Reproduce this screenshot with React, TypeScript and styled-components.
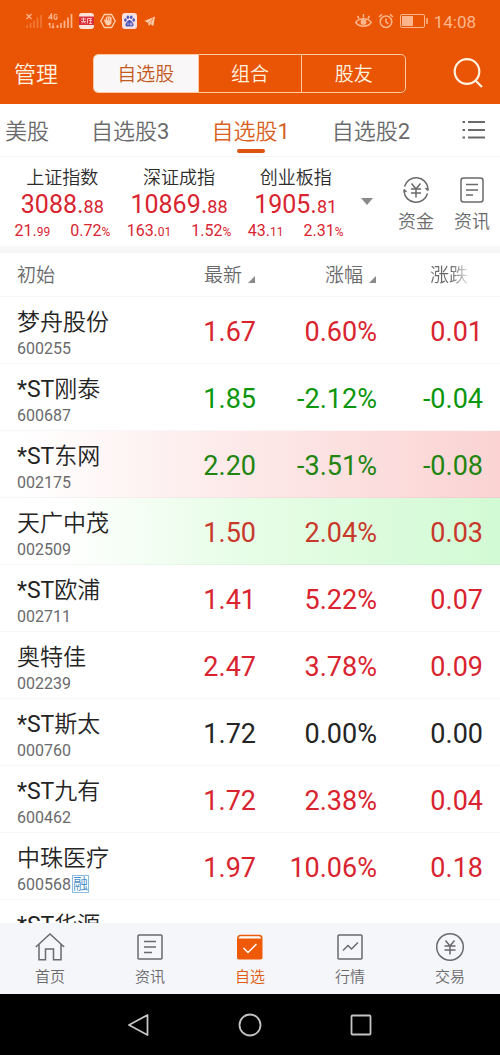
import React from "react";
import styled, { createGlobalStyle, css } from "styled-components";

const orange = "#e95504";
const red = "#d9242f";
const green = "#0c960c";
const ink = "#242424";
const grey = "#6a6a6c";

const GlobalStyle = createGlobalStyle`
  *, *::before, *::after { box-sizing: border-box; }
  body {
    margin: 0;
    background: #fff;
    color: ${ink};
    font-family: Roboto, "Noto Sans CJK SC DemiLight", "Noto Sans CJK SC", sans-serif;
  }
  button {
    margin: 0;
    padding: 0;
    border: 0;
    background: none;
    color: inherit;
    font: inherit;
    cursor: pointer;
  }
`;

const Screen = styled.div`
  display: flex;
  flex-direction: column;
  height: 100vh;
  overflow: hidden;
`;

const Top = styled.header`
  flex: none;
  background: ${orange};
  color: #fff3e2;
`;

const StatusBar = styled.div`
  display: flex;
  justify-content: space-between;
  align-items: center;
  height: 42px;
  padding: 0 24px 0 25px;
  color: #fbb58d;
`;

const StatusGroup = styled.div<{ $gap: number }>`
  display: flex;
  align-items: center;
  gap: ${(p) => p.$gap}px;
`;

const Clock = styled.time`
  padding-top: 2px;
  font-size: 17px;
  line-height: 20px;
`;

const HeaderBar = styled.div`
  display: grid;
  grid-template-columns: 79px 1fr 78px;
  align-items: center;
  height: 62px;
  padding: 0 16px 0 14px;
`;

const Manage = styled.button`
  justify-self: start;
  padding-top: 3px;
  font-size: 22px;
  line-height: 32px;
`;

const Segments = styled.div`
  display: grid;
  grid-template-columns: repeat(3, 1fr);
  height: 39px;
  border: 1px solid #ffc9a3;
  border-radius: 5px;
  overflow: hidden;
`;

const Segment = styled.button<{ $active?: boolean }>`
  padding-top: 3px;
  font-size: 19px;
  line-height: 28px;
  & + & { border-left: 1px solid #ffc9a3; }
  ${(p) => p.$active && css`
    background: #f9f7f7;
    color: #c4591f;
  `}
`;

const SearchButton = styled.button`
  justify-self: end;
  display: flex;
`;

const TabBar = styled.nav`
  flex: none;
  display: flex;
  align-items: center;
  justify-content: space-between;
  height: 53px;
  padding: 0 13px 0 5px;
  border-bottom: 1px solid #f4f4f4;
`;

const TabList = styled.div`
  display: flex;
  gap: 42px;
  height: 100%;
`;

const Tab = styled.button<{ $active?: boolean }>`
  position: relative;
  padding-top: 4px;
  font-size: 22px;
  line-height: 32px;
  white-space: nowrap;
  color: ${(p) => (p.$active ? "#d9601e" : grey)};
  ${(p) => p.$active && css`
    &::after {
      content: "";
      position: absolute;
      left: 50%;
      bottom: 3px;
      width: 28px;
      height: 4px;
      margin-left: -14px;
      border-radius: 2px;
      background: #dd5410;
    }
  `}
`;

const IconButton = styled.button`
  display: flex;
  color: ${grey};
`;

const IndexBar = styled.section`
  flex: none;
  display: flex;
  align-items: center;
  height: 96px;
  padding: 0 10px 0 4px;
  border-bottom: 7px solid #f7f7f7;
`;

const IndexGrid = styled.div`
  flex: 1;
  display: grid;
  grid-template-columns: repeat(3, 1fr);
`;

const IndexCard = styled.article`
  display: flex;
  flex-direction: column;
  align-items: center;
  padding-top: 3px;
  color: ${red};
`;

const IndexName = styled.h2`
  margin: 0;
  font-size: 18px;
  font-weight: 400;
  line-height: 26px;
  color: #2c2c2c;
`;

const IndexValue = styled.div`
  font-size: 25px;
  line-height: 28px;
  small { font-size: 18px; }
`;

const IndexDelta = styled.div`
  display: flex;
  gap: 20px;
  font-size: 16px;
  line-height: 20px;
  white-space: nowrap;
  small { font-size: 12px; }
`;

const Expand = styled.button`
  display: flex;
  margin: 0 25px 0 7px;
`;

const Shortcuts = styled.div`
  display: flex;
  gap: 20px;
`;

const Shortcut = styled.button`
  display: flex;
  flex-direction: column;
  align-items: center;
  gap: 5px;
  padding-top: 7px;
  font-size: 18px;
  line-height: 26px;
  color: ${grey};
`;

const ListArea = styled.main`
  flex: 1;
  min-height: 0;
  overflow-y: auto;
  scrollbar-width: none;
`;

const Table = styled.table`
  width: 100%;
  table-layout: fixed;
  border-spacing: 0;
`;

const HeadCell = styled.th<{ $width?: number; $last?: boolean }>`
  position: sticky;
  top: 0;
  width: ${(p) => (p.$width ? `${p.$width}px` : "auto")};
  height: 44px;
  padding: 2px ${(p) => (p.$last ? 32 : 1)}px 0 ${(p) => (p.$width ? 0 : 17)}px;
  border-bottom: 1px solid #f5f5f5;
  background: #fff;
  color: ${grey};
  font-size: 19px;
  font-weight: 400;
  line-height: 28px;
  text-align: ${(p) => (p.$width ? "right" : "left")};
`;

const SortButton = styled.button`
  display: inline-flex;
  align-items: center;
  gap: 6px;
`;

const SortMark = styled.svg`
  margin-top: 8px;
`;

const Faded = styled.button`
  mask-image: linear-gradient(90deg, #000 55%, transparent 110%);
`;

const tints = {
  none: "none",
  red: "linear-gradient(90deg, #fff 4%, #fde8e8 50%, #fbd3d3 100%)",
  green: "linear-gradient(90deg, #fff 12%, #e6fde6 50%, #d2fad4 100%)",
};

const Row = styled.tr<{ $tint: keyof typeof tints }>`
  background: ${(p) => tints[p.$tint]};
`;

const NameCell = styled.th`
  height: 67px;
  padding: 10px 0 6px 17px;
  border-bottom: 1px solid rgba(0, 0, 0, 0.03);
  font-weight: 400;
  text-align: left;
  white-space: nowrap;
`;

const StockName = styled.div`
  font-size: 23px;
  line-height: 32px;
`;

const StockCode = styled.div`
  display: flex;
  align-items: center;
  height: 18px;
  font-size: 16px;
  color: ${grey};
`;

const MarginTag = styled.span`
  margin-left: 1px;
  border: 1px solid #8cbbe0;
  font-size: 15px;
  line-height: 16px;
  color: #4a8fca;
`;

const NumberCell = styled.td<{ $color: string; $last?: boolean }>`
  padding: 4px ${(p) => (p.$last ? 17 : 0)}px 0 0;
  border-bottom: 1px solid rgba(0, 0, 0, 0.03);
  font-size: 27px;
  line-height: 32px;
  text-align: right;
  color: ${(p) => p.$color};
`;

const BottomNav = styled.nav`
  flex: none;
  display: grid;
  grid-template-columns: repeat(5, 1fr);
  height: 71px;
  background: #f5f6fa;
`;

const NavItem = styled.button<{ $active?: boolean }>`
  display: flex;
  flex-direction: column;
  align-items: center;
  padding-top: 9px;
  gap: 4px;
  font-size: 15px;
  line-height: 22px;
  color: ${(p) => (p.$active ? "#e05a12" : grey)};
`;

const SystemBar = styled.footer`
  flex: none;
  display: flex;
  align-items: center;
  justify-content: center;
  gap: 87px;
  height: 61px;
  background: #000;
`;

const SystemButton = styled.button`
  display: flex;
  color: #c4c4c4;
`;

const Stroke = ({ size, children, width = 1.6 }: { size: number; width?: number; children: React.ReactNode }) => (
  <svg width={size} height={size} viewBox={`0 0 ${size} ${size}`} fill="none" stroke="currentColor" strokeWidth={width} aria-hidden="true">
    {children}
  </svg>
);

const StatusLeft = () => (
  <StatusGroup $gap={6}>
    <svg width="17" height="16" viewBox="0 0 17 16" fill="none" stroke="currentColor" aria-hidden="true">
      <path d="M1.500 1l5 5M6.500 1l-5 5" strokeWidth="1.300" />
      <path d="M2 15v-3M5.500 15v-5M9 15V7.500M12.500 15V4.500M16 15V2" strokeWidth="1.600" opacity=".4" />
    </svg>
    <svg width="25" height="16" viewBox="0 0 25 16" fill="none" stroke="currentColor" aria-hidden="true">
      <path d="M3.500 6.500V1L.800 4.800h3.800M9 2.200C8 .600 6 1 6 3.700s2 3.300 3 2V4H7.600" strokeWidth="1.200" />
      <path d="M2 10v5M.500 11.500L2 10M5 10v5M3.800 13.600L5 15l1.300-1.400" strokeWidth="1.100" />
      <path d="M9.500 15v-3M13 15v-5M16.500 15V7.500M20 15V4.500M23.500 15V1" strokeWidth="1.700" />
    </svg>
    <svg width="15" height="16" viewBox="0 0 15 16" aria-hidden="true">
      <rect width="15" height="16" rx="3" fill="#fde3da" />
      <path d="M0 3.500h15v8.500H0z" fill="#dc2f3c" />
      <path d="M2 6h5M4.500 4.500v3.500M2 8.500h5M3 10.500l1.500-2 2 2M8.500 5.500v5M8.500 5.500h4.500M10 7.500h3M11.500 6v4.500M10 10.500h3" stroke="#fbc9c4" strokeWidth=".9" fill="none" />
    </svg>
    <svg width="16" height="16" viewBox="0 0 16 16" fill="none" stroke="#ffd0b0" aria-hidden="true">
      <path d="M4.300 1.500h7.400L15.200 8l-3.500 6.500H4.300L.800 8z" strokeWidth="1.400" strokeLinejoin="round" />
      <path d="M5 9l-.8-2 1-.4L6 8V4.500c0-.8 5-1.200 5.200 0v5c0 3-4.500 3.500-5.500 1z" fill="#ffd0b0" strokeWidth=".6" />
      <path d="M7.500 4.500v3M9.300 4.500v3" stroke={orange} strokeWidth=".6" />
    </svg>
    <svg width="15" height="16" viewBox="0 0 15 16" aria-hidden="true">
      <rect width="15" height="16" rx="3" fill="#f8e0de" />
      <g fill="#4a55bd">
        <ellipse cx="3.400" cy="7" rx="1.300" ry="1.700" />
        <ellipse cx="5.900" cy="4.200" rx="1.300" ry="1.800" />
        <ellipse cx="9.200" cy="4.200" rx="1.300" ry="1.800" />
        <ellipse cx="11.700" cy="7" rx="1.300" ry="1.700" />
        <path d="M7.500 7c1.700 0 2 1.600 3.200 2.700 1.600 1.600.8 3.900-1 3.900-.9 0-1.300-.3-2.200-.3s-1.300.3-2.200.3c-1.800 0-2.600-2.300-1-3.900C5.500 8.600 5.800 7 7.500 7z" />
      </g>
      <path d="M6 9.800v2.200M8.300 9.800V12h1.500V9.800" stroke="#f8e0de" strokeWidth=".7" fill="none" />
    </svg>
    <svg width="14" height="16" viewBox="1 0 14 16" aria-hidden="true">
      <path d="M2.500 8L13 3.500l-1.700 9.500-2.800-2L6.800 13 6 9.800z" fill="#ffd0b0" />
      <path d="M6 9.800l5-4.300M8.500 11l2.500-5.500" stroke={orange} strokeWidth=".5" />
    </svg>
  </StatusGroup>
);

const StatusRight = () => (
  <StatusGroup $gap={6}>
    <svg width="17" height="16" viewBox="0 0 17 16" fill="none" stroke="currentColor" strokeWidth="1.500" aria-hidden="true">
      <path d="M.800 9.500C4 4.600 13 4.600 16.200 9.500 13 14.400 4 14.400.800 9.500z" />
      <path d="M8.500 4.500V1M4 5.500L2.500 3M13 5.500L14.500 3" />
      <circle cx="8.500" cy="9" r="2.200" fill="currentColor" />
    </svg>
    <svg width="16" height="16" viewBox="0 0 16 16" fill="none" stroke="currentColor" strokeWidth="1.500" aria-hidden="true">
      <circle cx="8" cy="8.700" r="5.800" />
      <path d="M8 5.500v3.400l2.300 2M1 4l3-2.800M15 4l-3-2.800" />
    </svg>
    <svg width="28" height="14" viewBox="1 0 28 14" fill="none" stroke="currentColor" aria-hidden="true">
      <rect x="1.500" y=".500" width="24" height="13" rx="1.500" strokeWidth="1" />
      <path d="M3 2h11v10H3z" fill="currentColor" stroke="none" />
      <path d="M28 4v6" strokeWidth="1.600" />
    </svg>
    <Clock>14:08</Clock>
  </StatusGroup>
);

const indices = [
  { name: "上证指数", value: ["3088.", "88"], diff: ["21.", "99"], pct: "0.72" },
  { name: "深证成指", value: ["10869.", "88"], diff: ["163.", "01"], pct: "1.52" },
  { name: "创业板指", value: ["1905.", "81"], diff: ["43.", "11"], pct: "2.31" },
];

type Stock = { name: string; code?: string; price?: string; pct?: string; diff?: string; color: string; tint?: "red" | "green"; margin?: boolean };

const stocks: Stock[] = [
  { name: "梦舟股份", code: "600255", price: "1.67", pct: "0.60%", diff: "0.01", color: red },
  { name: "*ST刚泰", code: "600687", price: "1.85", pct: "-2.12%", diff: "-0.04", color: green },
  { name: "*ST东网", code: "002175", price: "2.20", pct: "-3.51%", diff: "-0.08", color: "#228510", tint: "red" },
  { name: "天广中茂", code: "002509", price: "1.50", pct: "2.04%", diff: "0.03", color: "#c8392b", tint: "green" },
  { name: "*ST欧浦", code: "002711", price: "1.41", pct: "5.22%", diff: "0.07", color: red },
  { name: "奥特佳", code: "002239", price: "2.47", pct: "3.78%", diff: "0.09", color: red },
  { name: "*ST斯太", code: "000760", price: "1.72", pct: "0.00%", diff: "0.00", color: ink },
  { name: "*ST九有", code: "600462", price: "1.72", pct: "2.38%", diff: "0.04", color: red },
  { name: "中珠医疗", code: "600568", price: "1.97", pct: "10.06%", diff: "0.18", color: red, margin: true },
  { name: "*ST华源", color: red },
];

const Sortable = ({ children }: { children: string }) => (
  <SortButton>
    {children}
    <SortMark width="7" height="7" viewBox="0 0 7 7" aria-hidden="true">
      <path d="M7 0v7H0z" fill="#8a8a8a" />
    </SortMark>
  </SortButton>
);

const navItems = [
  { label: "首页", icon: <path d="M.800 15L15 2l14.200 13M4 12.500v15.300h6.500V17h8v10.800H26V12.500" /> },
  { label: "资讯", icon: <><rect x="3" y="3" width="24" height="24" rx="1" /><path d="M9 9.500h12M9 15h12M9 20.500h8" /></> },
  {
    label: "自选",
    active: true,
    icon: (
      <>
        <path d="M2 6.500C2 4 3.500 2.700 5.500 2.700h19c2 0 3 1.300 3 3.300v19.500c0 1.200-.8 2-2 2H4c-1.200 0-2-.8-2-2z" fill="#ee5a08" stroke="none" />
        <path d="M3.500 6.500c.2-1.400 1-2.300 2.300-2.300h18c1.400 0 2 .9 2.300 2.300z" fill="#fff" stroke="none" />
        <path d="M8.500 16l4.500 4.500 8.500-8.500" stroke="#fff" />
      </>
    ),
  },
  { label: "行情", icon: <><rect x="3" y="3" width="24" height="24" rx="1" /><path d="M8 18.500l5-5 3.500 3.500L23 10.500" /></> },
  { label: "交易", icon: <><circle cx="15" cy="15" r="13.300" /><path d="M10.500 8.500L15 14l4.500-5.500M9.500 14h11M9.500 18h11M15 14v8.500" /></> },
];

export default function App() {
  return (
    <Screen>
      <GlobalStyle />
      <Top>
        <StatusBar>
          <StatusLeft />
          <StatusRight />
        </StatusBar>
        <HeaderBar>
          <Manage>管理</Manage>
          <Segments>
            <Segment $active>自选股</Segment>
            <Segment>组合</Segment>
            <Segment>股友</Segment>
          </Segments>
          <SearchButton aria-label="搜索">
            <Stroke size={32} width={2.2}>
              <circle cx="15" cy="14.500" r="12.300" />
              <path d="M23.500 23.500l6.500 6.500" />
            </Stroke>
          </SearchButton>
        </HeaderBar>
      </Top>

      <TabBar>
        <TabList>
          <Tab>美股</Tab>
          <Tab>自选股3</Tab>
          <Tab $active>自选股1</Tab>
          <Tab>自选股2</Tab>
        </TabList>
        <IconButton aria-label="列表">
          <Stroke size={26} width={2}>
            <path d="M7 5h17M7 13h17M7 20.500h17M1.500 5h2.500M1.500 13h2.500M1.500 20.500h2.500" />
          </Stroke>
        </IconButton>
      </TabBar>

      <IndexBar>
        <IndexGrid>
          {indices.map((i) => (
            <IndexCard key={i.name}>
              <IndexName>{i.name}</IndexName>
              <IndexValue>{i.value[0]}<small>{i.value[1]}</small></IndexValue>
              <IndexDelta>
                <span>{i.diff[0]}<small>{i.diff[1]}</small></span>
                <span>{i.pct}<small>%</small></span>
              </IndexDelta>
            </IndexCard>
          ))}
        </IndexGrid>
        <Expand aria-label="展开">
          <svg width="12" height="7" viewBox="0 0 12 7" aria-hidden="true"><path d="M0 0h12L6 7z" fill="#8a8a8a" /></svg>
        </Expand>
        <Shortcuts>
          <Shortcut>
            <Stroke size={28} width={1.5}>
              <path d="M2.500 10.500A12 12 0 0 1 26 12.500v2M25.500 17.500A12 12 0 0 1 2 15.500v-2M23.500 12l2.500 2.500M4.500 16L2 13.500" />
              <path d="M9.500 7.500L14 13l4.500-5.500M9 13h10M9 17h10M14 13v8.500" />
            </Stroke>
            资金
          </Shortcut>
          <Shortcut>
            <Stroke size={28} width={1.5}>
              <rect x="3" y="2" width="22" height="24" rx="2.500" />
              <path d="M8 8.500h12M8 14h12M8 19h7" />
            </Stroke>
            资讯
          </Shortcut>
        </Shortcuts>
      </IndexBar>

      <ListArea>
        <Table>
          <thead>
            <tr>
              <HeadCell scope="col">初始</HeadCell>
              <HeadCell scope="col" $width={106}><Sortable>最新</Sortable></HeadCell>
              <HeadCell scope="col" $width={121}><Sortable>涨幅</Sortable></HeadCell>
              <HeadCell scope="col" $width={123} $last><Faded>涨跌</Faded></HeadCell>
            </tr>
          </thead>
          <tbody>
            {stocks.map((s) => (
              <Row key={s.name} $tint={s.tint ?? "none"}>
                <NameCell scope="row">
                  <StockName>{s.name}</StockName>
                  <StockCode>{s.code}{s.margin && <MarginTag>融</MarginTag>}</StockCode>
                </NameCell>
                <NumberCell $color={s.color}>{s.price}</NumberCell>
                <NumberCell $color={s.color}>{s.pct}</NumberCell>
                <NumberCell $color={s.color} $last>{s.diff}</NumberCell>
              </Row>
            ))}
          </tbody>
        </Table>
      </ListArea>

      <BottomNav>
        {navItems.map((n) => (
          <NavItem key={n.label} $active={n.active}>
            <Stroke size={30} width={1.5}>{n.icon}</Stroke>
            {n.label}
          </NavItem>
        ))}
      </BottomNav>

      <SystemBar>
        <SystemButton aria-label="返回">
          <Stroke size={24} width={1.8}><path d="M20.500 2v20L2 12z" strokeLinejoin="round" /></Stroke>
        </SystemButton>
        <SystemButton aria-label="主屏幕">
          <Stroke size={24} width={1.8}><circle cx="12" cy="12" r="10.500" /></Stroke>
        </SystemButton>
        <SystemButton aria-label="最近任务">
          <Stroke size={24} width={1.8}><rect x="2.500" y="2.500" width="19" height="19" rx="1" /></Stroke>
        </SystemButton>
      </SystemBar>
    </Screen>
  );
}
